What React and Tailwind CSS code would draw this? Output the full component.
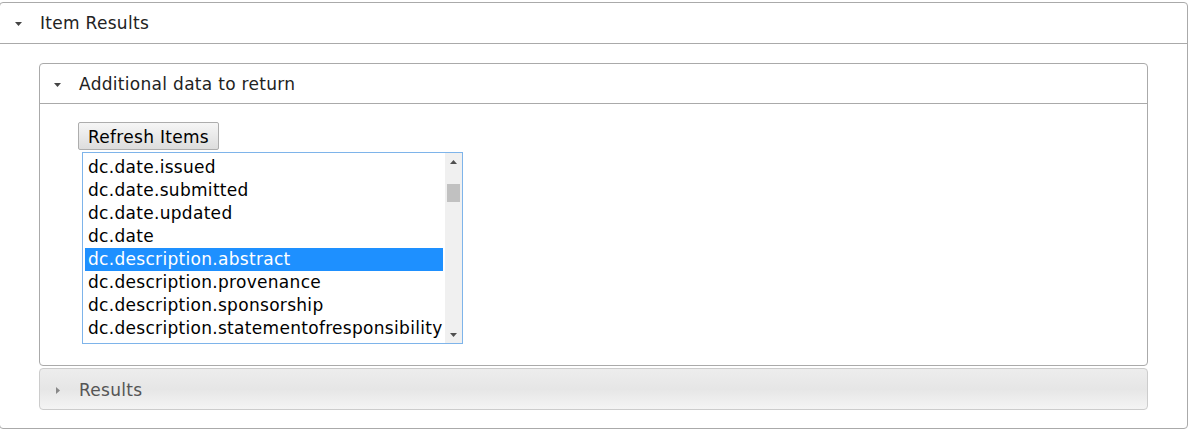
const ITEMS = [
  "dc.date.issued",
  "dc.date.submitted",
  "dc.date.updated",
  "dc.date",
  "dc.description.abstract",
  "dc.description.provenance",
  "dc.description.sponsorship",
  "dc.description.statementofresponsibility",
];

function Caret({ open, className }) {
  return open ? (
    <svg viewBox="0 0 7 4" className={className} width="7" height="4">
      <path d="M0 0 H7 L3.5 4 Z" fill="currentColor" />
    </svg>
  ) : (
    <svg viewBox="0 0 4 7" className={className} width="4" height="7">
      <path d="M0 0 V7 L4 3.5 Z" fill="currentColor" />
    </svg>
  );
}

export default function App() {
  return (
    <div
      className="w-[1193px] h-[437px] bg-white text-[#222] overflow-hidden tracking-[0.3px]"
      style={{ fontFamily: '"DejaVu Sans", Verdana, sans-serif' }}
    >
      <div className="mt-[2px] ml-[-1px] w-[1189px] h-[427px] border border-[#aaa] rounded-[4px] flex flex-col">
        {/* Outer header */}
        <div className="h-[41px] border-b border-[#aaa] flex items-center pl-[15px] gap-[18px] text-[17px] pt-[1px]">
          <Caret open className="text-[#444]" />
          <span>Item Results</span>
        </div>

        {/* Outer body */}
        <div className="pt-[19px] pl-[39px] pr-[39px] flex flex-col gap-[2px]">
          {/* Inner panel */}
          <div className="border border-[#aaa] rounded-[4px] flex flex-col">
            <div className="h-[40px] border-b border-[#aaa] flex items-center pl-[14px] gap-[18px] text-[17px] pt-[3px]">
              <Caret open className="text-[#444]" />
              <span>Additional data to return</span>
            </div>
            <div className="pt-[18px] pl-[38px] pb-[21px] flex flex-col items-start">
              <button className="h-[28px] w-[141px] border border-[#adadad] rounded-[2px] bg-gradient-to-b from-[#f6f6f6] to-[#dddddd] text-[17px] text-black leading-none pt-[2px]">
                Refresh Items
              </button>
              <div className="ml-[4px] mt-[2px] w-[381px] h-[192px] border border-[#7eb4ea] flex bg-white">
                <div className="flex-1 pt-[3px] pl-[2px] pr-[2px] overflow-hidden">
                  {ITEMS.map((item, i) => (
                    <div
                      key={item}
                      className={
                        i === 4
                          ? "h-[23px] pl-[3px] flex items-center text-[17px] whitespace-nowrap bg-[#1e90ff] text-white"
                          : "h-[23px] pl-[3px] flex items-center text-[17px] whitespace-nowrap text-black"
                      }
                    >
                      {item}
                    </div>
                  ))}
                </div>
                <div className="w-[17px] bg-[#f0f0f0] flex flex-col items-center">
                  <div className="h-[17px] flex items-center justify-center">
                    <svg width="7" height="4" viewBox="0 0 7 4">
                      <path d="M0 4 H7 L3.5 0 Z" fill="#505050" />
                    </svg>
                  </div>
                  <div className="w-[13px] h-[18px] bg-[#c1c1c1] mt-[14px]" />
                  <div className="flex-1" />
                  <div className="h-[17px] flex items-center justify-center">
                    <svg width="7" height="4" viewBox="0 0 7 4">
                      <path d="M0 0 H7 L3.5 4 Z" fill="#505050" />
                    </svg>
                  </div>
                </div>
              </div>
            </div>
          </div>

          {/* Results collapsed */}
          <div className="h-[42px] border border-[#ccc] rounded-[4px] bg-gradient-to-b from-[#ededed] via-[#e6e6e6] to-[#f4f4f4] flex items-center pl-[16px] gap-[19px] text-[17px] text-[#555] pt-[3px]">
            <Caret className="text-[#888]" />
            <span>Results</span>
          </div>
        </div>
      </div>
    </div>
  );
}
